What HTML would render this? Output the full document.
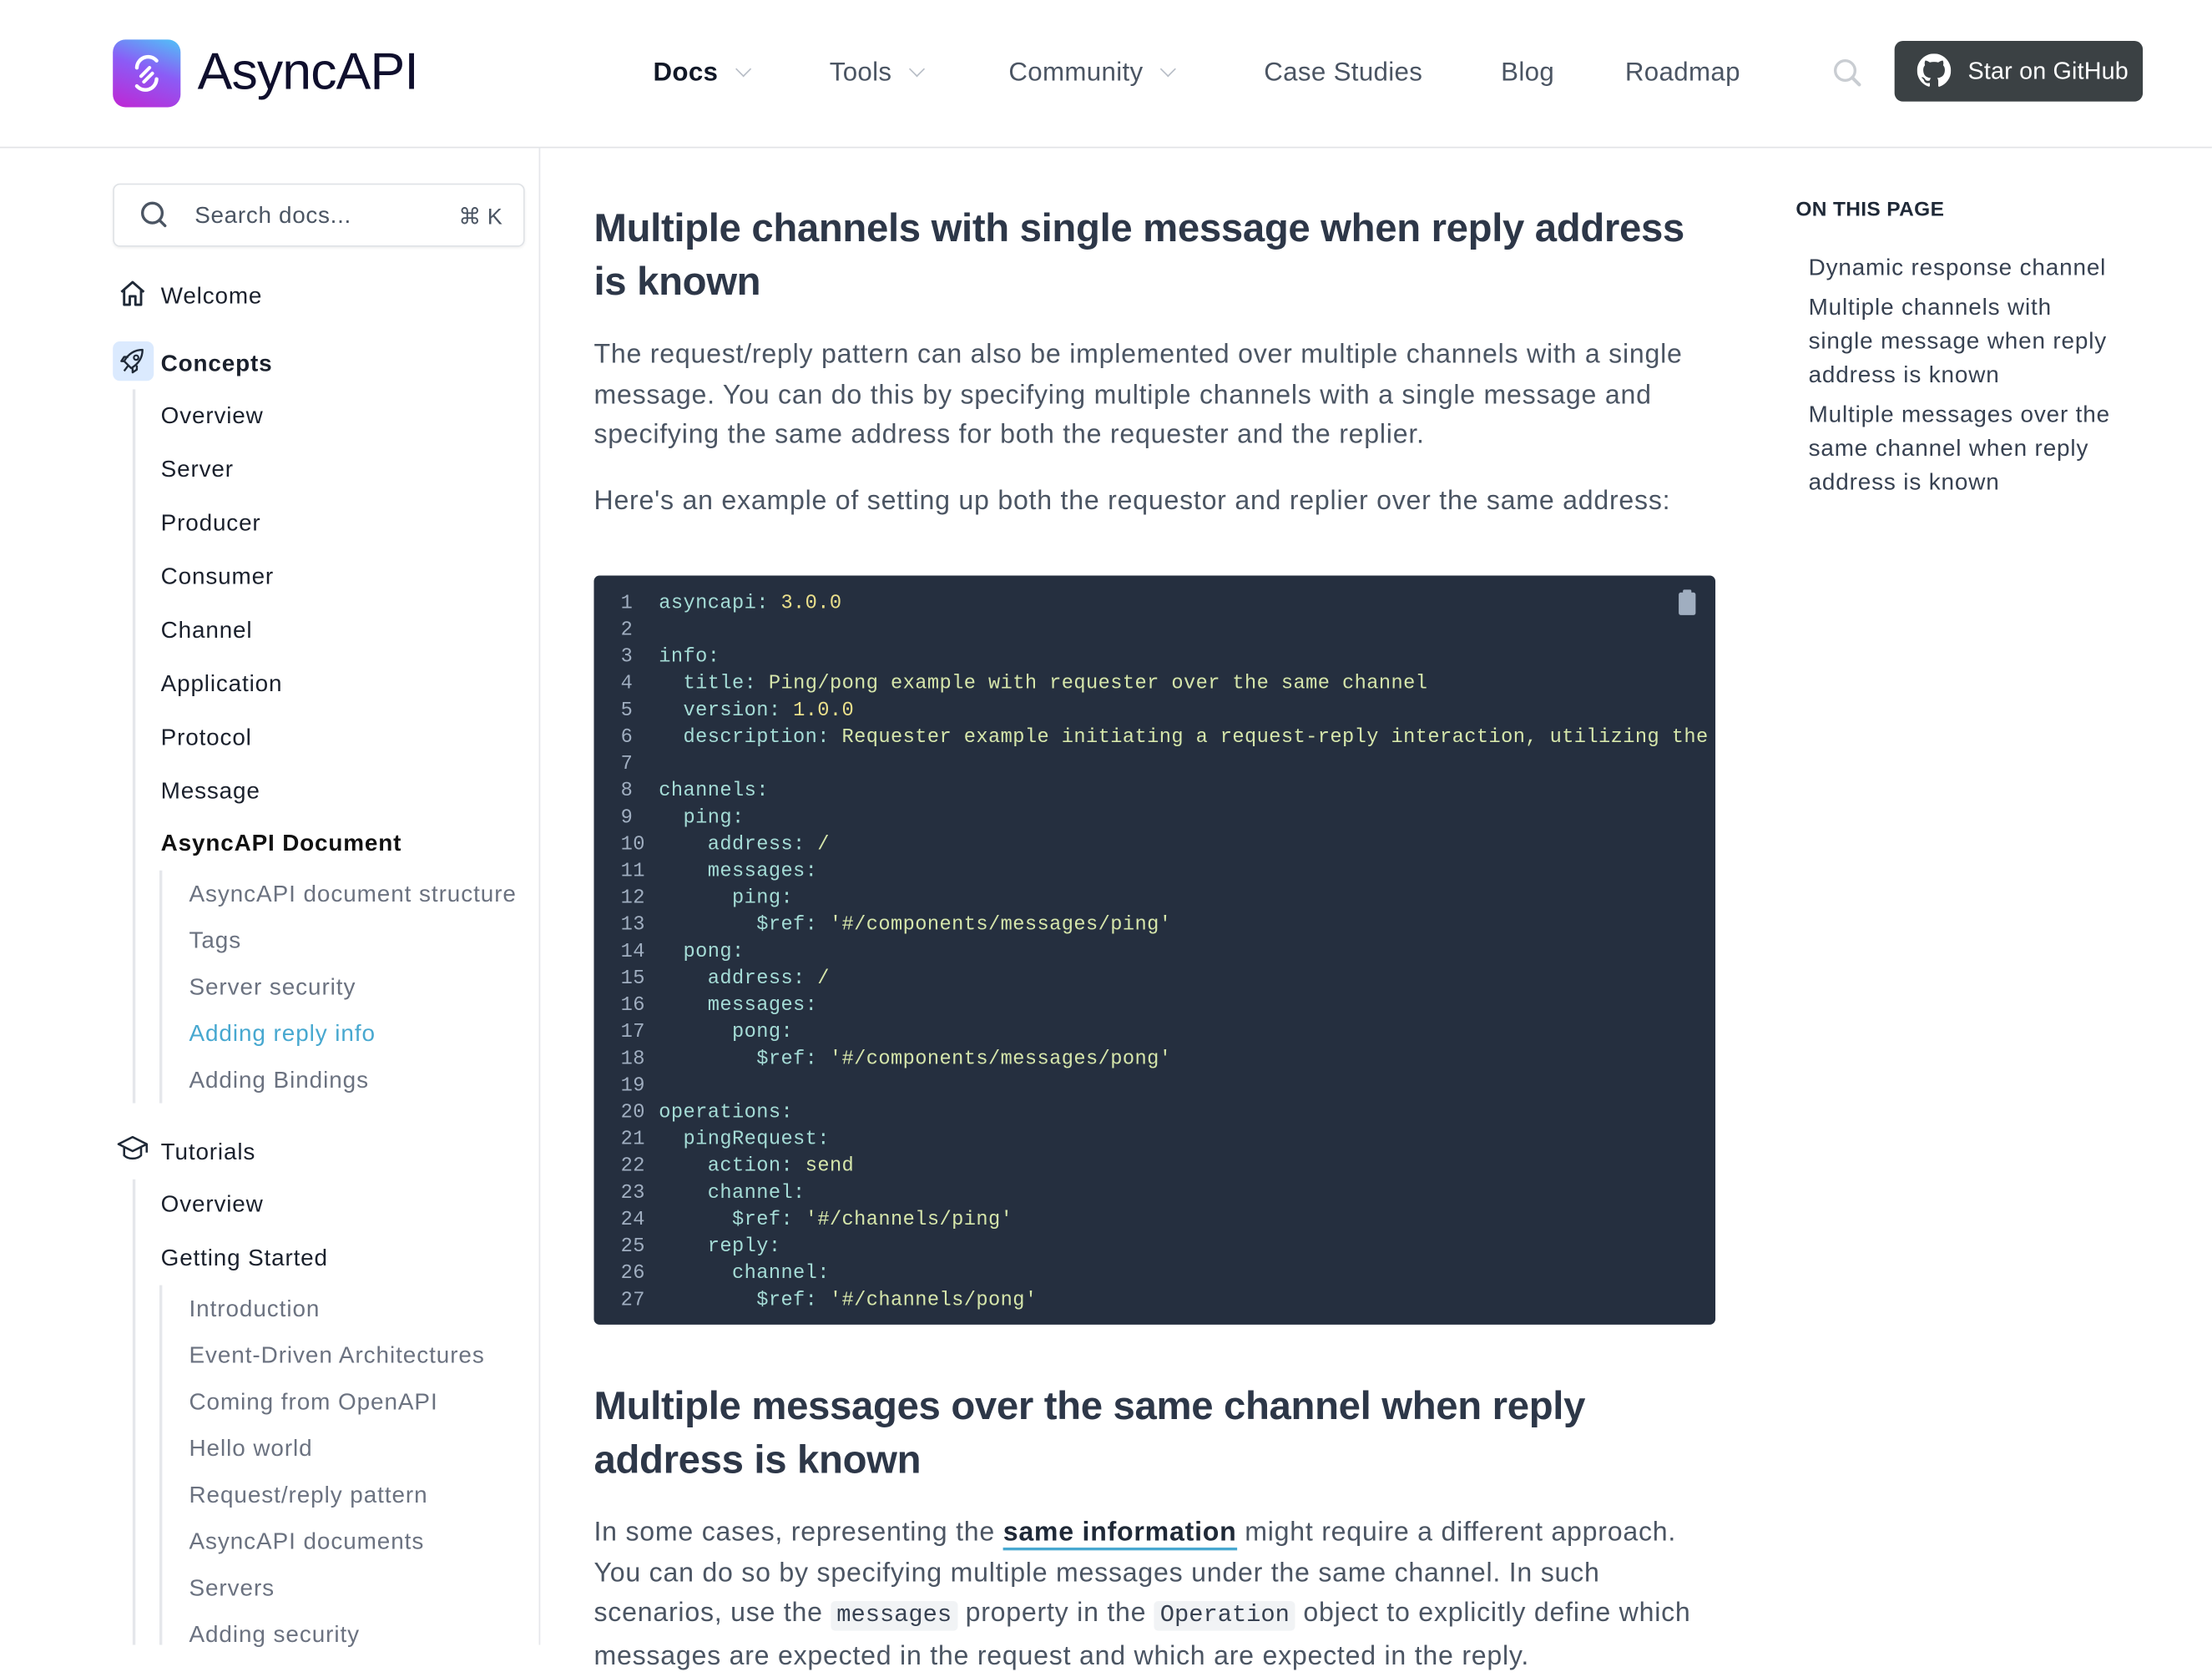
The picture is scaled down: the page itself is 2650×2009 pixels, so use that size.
<!DOCTYPE html>
<html><head><meta charset="utf-8">
<style>
html,body{margin:0;padding:0;background:#fff;overflow:hidden;width:2650px;height:1970px}
#w{position:absolute;left:0;top:0;width:1568px;height:1166px;transform:scale(1.690);transform-origin:0 0;font-family:"Liberation Sans",sans-serif;color:#1f2937}
.a{position:absolute;white-space:nowrap}
.nav{font-size:18.5px;color:#4b5563;top:40px;letter-spacing:.2px}
.chev{display:inline-block;width:7px;height:7px;border-right:1.6px solid #b8bec7;border-bottom:1.6px solid #b8bec7;transform:rotate(45deg);margin-left:14px;position:relative;top:-4px}
.si{font-size:16.5px;color:#1a202c;left:114px;letter-spacing:.5px}
.ss{font-size:16.5px;color:#6b7280;left:134px;letter-spacing:.55px}
.p{font-size:19px;color:#4b5563;left:421px;line-height:28.5px;white-space:normal;letter-spacing:.45px}
.h{font-size:28px;font-weight:bold;color:#2d3748;left:421px;line-height:38px;white-space:normal;letter-spacing:-.2px}
pre{margin:0;font-family:"Liberation Mono",monospace;font-size:14px;line-height:19px;color:#a5dcd6;letter-spacing:.25px}
.n{color:#a0aec0;display:inline-block;width:27px}
.s{color:#d6e6ab}.y{color:#ebe08c}
.toc{font-size:16.5px;color:#374151;left:1282px;line-height:24px;white-space:normal;width:222px;letter-spacing:.5px}
code{font-family:"Liberation Mono",monospace;background:#f1f3f5;padding:1px 4px;border-radius:3px;font-size:17px;color:#374151;letter-spacing:0}
</style></head><body><div id="w">
<div class="a" style="left:80px;top:28px;width:48px;height:48px;border-radius:9px;background:linear-gradient(200deg,#4fc3f7 0%,#8b5cf6 45%,#c026d3 100%)"></div>
<svg class="a" style="left:80px;top:28px" width="48" height="48" viewBox="0 0 48 48"><path d="M17 20a8 8 0 0 1 14-5M31 28a8 8 0 0 1-14 5" stroke="#fff" stroke-width="2.6" fill="none" stroke-linecap="round"/><path d="M20 26l6-6M22 30l6-6" stroke="#fff" stroke-width="2.4" stroke-linecap="round"/></svg>
<div class="a" style="left:140px;top:30px;font-size:37px;color:#0f0f2d;letter-spacing:-0.5px">AsyncAPI</div>
<div class="a nav" style="left:463px;color:#111827;font-weight:bold">Docs<span class="chev"></span></div>
<div class="a nav" style="left:588px">Tools<span class="chev"></span></div>
<div class="a nav" style="left:715px">Community<span class="chev"></span></div>
<div class="a nav" style="left:896px">Case Studies</div>
<div class="a nav" style="left:1064px">Blog</div>
<div class="a nav" style="left:1152px">Roadmap</div>
<svg class="a" style="left:1299px;top:41px" width="22" height="22" viewBox="0 0 22 22"><circle cx="9" cy="9" r="7" stroke="#c9cdd2" stroke-width="2" fill="none"/><path d="M14 14l5 5" stroke="#c9cdd2" stroke-width="2.4" stroke-linecap="round"/></svg>
<div class="a" style="left:1343px;top:29px;width:176px;height:43px;background:#3b4144;border-radius:6px"></div>
<svg class="a" style="left:1359px;top:38px" width="24" height="24" viewBox="0 0 16 16"><path fill="#fff" d="M8 0C3.58 0 0 3.580 0 8c0 3.54 2.29 6.53 5.47 7.59.4.07.55-.17.55-.38v-1.33c-2.230.48-2.7-1.07-2.7-1.07-.36-.92-.89-1.17-.89-1.17-.73-.5.05-.49.05-.49.8.06 1.23.83 1.23.83.71 1.22 1.870.87 2.33.66.07-.52.28-.87.51-1.07-1.78-.2-3.64-.89-3.64-3.95 0-.87.31-1.59.82-2.15-.08-.2-.36-1.02.08-2.12 0 0 .67-.21 2.2.82a7.6 7.6 0 0 1 4 0c1.53-1.04 2.2-.82 2.2-.82.44 1.1.16 1.92.08 2.12.51.56.82 1.27.82 2.15 0 3.07-1.87 3.75-3.65 3.95.29.25.54.73.54 1.48v2.2c0 .21.15.46.55.38A8.01 8.01 0 0 0 16 8c0-4.42-3.58-8-8-8z"/></svg>
<div class="a" style="left:1395px;top:41px;font-size:17px;color:#fff;letter-spacing:.1px">Star on GitHub</div>
<div class="a" style="left:0;top:104px;width:1568px;height:1px;background:#e2e4e7"></div>
<div class="a" style="left:382px;top:105px;width:1px;height:1061px;background:#e5e7eb"></div>
<div class="a" style="left:80px;top:130px;width:290px;height:43px;border:1px solid #dfe2e6;border-radius:5px;box-shadow:0 1px 2px rgba(0,0,0,.06)"></div>
<svg class="a" style="left:98px;top:141px" width="22" height="22" viewBox="0 0 22 22"><circle cx="10" cy="10" r="7" stroke="#4b5563" stroke-width="2" fill="none"/><path d="M15 15l4 4" stroke="#4b5563" stroke-width="2" stroke-linecap="round"/></svg>
<div class="a" style="left:138px;top:144px;font-size:16.5px;color:#4b5563;letter-spacing:.4px">Search docs...</div>
<div class="a" style="left:325px;top:144px;font-size:16px;color:#4b5563">⌘ K</div>
<svg class="a" style="left:83px;top:197px" width="22" height="22" viewBox="0 0 22 22"><path d="M3 10l8-7 8 7M5 8v11h4v-6h4v6h4V8" stroke="#1f2937" stroke-width="1.7" fill="none" stroke-linejoin="round"/></svg>
<div class="a si" style="top:201px">Welcome</div>
<div class="a" style="left:80px;top:242px;width:29px;height:28px;background:#dbeafe;border-radius:5px"></div>
<svg class="a" style="left:83px;top:245px" width="22" height="22" viewBox="0 0 22 22"><path d="M8 14l-3-3c3-5 7-8 13-8-0 6-3 10-8 13zM8 14l-3 4M6 11l-3 0 2-3h3M11 16v3l3-2v-3" stroke="#1f2937" stroke-width="1.4" fill="none" stroke-linejoin="round"/><circle cx="13.5" cy="8.5" r="1.6" stroke="#1f2937" stroke-width="1.3" fill="none"/></svg>
<div class="a si" style="top:249px;font-weight:bold">Concepts</div>
<div class="a" style="left:94px;top:276px;width:1.5px;height:506px;background:#e5e7eb"></div>
<div class="a si" style="top:286px">Overview</div>
<div class="a si" style="top:324px">Server</div>
<div class="a si" style="top:362px">Producer</div>
<div class="a si" style="top:400px">Consumer</div>
<div class="a si" style="top:438px">Channel</div>
<div class="a si" style="top:476px">Application</div>
<div class="a si" style="top:514px">Protocol</div>
<div class="a si" style="top:552px">Message</div>
<div class="a si" style="top:589px;font-weight:bold;color:#111">AsyncAPI Document</div>
<div class="a" style="left:113px;top:617px;width:1.5px;height:165px;background:#e5e7eb"></div>
<div class="a ss" style="top:625px">AsyncAPI document structure</div>
<div class="a ss" style="top:658px">Tags</div>
<div class="a ss" style="top:691px">Server security</div>
<div class="a ss" style="top:724px;color:#47a8d0">Adding reply info</div>
<div class="a ss" style="top:757px">Adding Bindings</div>
<svg class="a" style="left:82px;top:804px" width="24" height="22" viewBox="0 0 24 22"><path d="M2 7l10-5 10 5-10 5zM6 9v6c3 3 9 3 12 0V9M22 7v6" stroke="#1f2937" stroke-width="1.5" fill="none" stroke-linejoin="round"/></svg>
<div class="a si" style="top:808px">Tutorials</div>
<div class="a" style="left:94px;top:836px;width:1.5px;height:330px;background:#e5e7eb"></div>
<div class="a si" style="top:845px">Overview</div>
<div class="a si" style="top:883px">Getting Started</div>
<div class="a" style="left:113px;top:911px;width:1.5px;height:255px;background:#e5e7eb"></div>
<div class="a ss" style="top:919px">Introduction</div>
<div class="a ss" style="top:952px">Event-Driven Architectures</div>
<div class="a ss" style="top:985px">Coming from OpenAPI</div>
<div class="a ss" style="top:1018px">Hello world</div>
<div class="a ss" style="top:1051px">Request/reply pattern</div>
<div class="a ss" style="top:1084px">AsyncAPI documents</div>
<div class="a ss" style="top:1117px">Servers</div>
<div class="a ss" style="top:1150px">Adding security</div>
<div class="a h" style="top:143px;width:800px">Multiple channels with single message when reply address is known</div>
<div class="a p" style="top:238px;width:800px">The request/reply pattern can also be implemented over multiple channels with a single message. You can do this by specifying multiple channels with a single message and specifying the same address for both the requester and the replier.</div>
<div class="a p" style="top:342px">Here's an example of setting up both the requestor and replier over the same address:</div>
<div class="a" style="left:421px;top:408px;width:795px;height:531px;background:#252f3f;border-radius:4px;overflow:hidden">
<svg style="position:absolute;left:767px;top:9px" width="16" height="20" viewBox="0 0 16 20"><rect x="2" y="3" width="12" height="16" rx="1.5" fill="#a0aec0"/><rect x="5" y="1" width="6" height="4" rx="1" fill="#a0aec0"/></svg>
<pre style="position:absolute;left:19px;top:11px"><span class="n">1</span>asyncapi: <span class="y">3.0.0</span>
<span class="n">2</span>
<span class="n">3</span>info:
<span class="n">4</span>  title: <span class="s">Ping/pong example with requester over the same channel</span>
<span class="n">5</span>  version: <span class="y">1.0.0</span>
<span class="n">6</span>  description: <span class="s">Requester example initiating a request-reply interaction, utilizing the same channel</span>
<span class="n">7</span>
<span class="n">8</span>channels:
<span class="n">9</span>  ping:
<span class="n">10</span>    address: <span class="s">/</span>
<span class="n">11</span>    messages:
<span class="n">12</span>      ping:
<span class="n">13</span>        $ref: <span class="s">'#/components/messages/ping'</span>
<span class="n">14</span>  pong:
<span class="n">15</span>    address: <span class="s">/</span>
<span class="n">16</span>    messages:
<span class="n">17</span>      pong:
<span class="n">18</span>        $ref: <span class="s">'#/components/messages/pong'</span>
<span class="n">19</span>
<span class="n">20</span>operations:
<span class="n">21</span>  pingRequest:
<span class="n">22</span>    action: <span class="s">send</span>
<span class="n">23</span>    channel:
<span class="n">24</span>      $ref: <span class="s">'#/channels/ping'</span>
<span class="n">25</span>    reply:
<span class="n">26</span>      channel:
<span class="n">27</span>        $ref: <span class="s">'#/channels/pong'</span></pre>
</div>
<div class="a h" style="top:978px;width:800px">Multiple messages over the same channel when reply address is known</div>
<div class="a p" style="top:1073px;width:800px">In some cases, representing the <b style="color:#1f2937;border-bottom:2px solid #47a8d0">same information</b> might require a different approach. You can do so by specifying multiple messages under the same channel. In such scenarios, use the <code>messages</code> property in the <code>Operation</code> object to explicitly define which messages are expected in the request and which are expected in the reply.</div>
<div class="a" style="left:1273px;top:141px;font-size:14.5px;font-weight:bold;color:#1f2937;letter-spacing:.2px">ON THIS PAGE</div>
<div class="a toc" style="top:178px">Dynamic response channel</div>
<div class="a toc" style="top:206px;width:215px">Multiple channels with single message when reply address is known</div>
<div class="a toc" style="top:282px">Multiple messages over the same channel when reply address is known</div>
</div></body></html>
